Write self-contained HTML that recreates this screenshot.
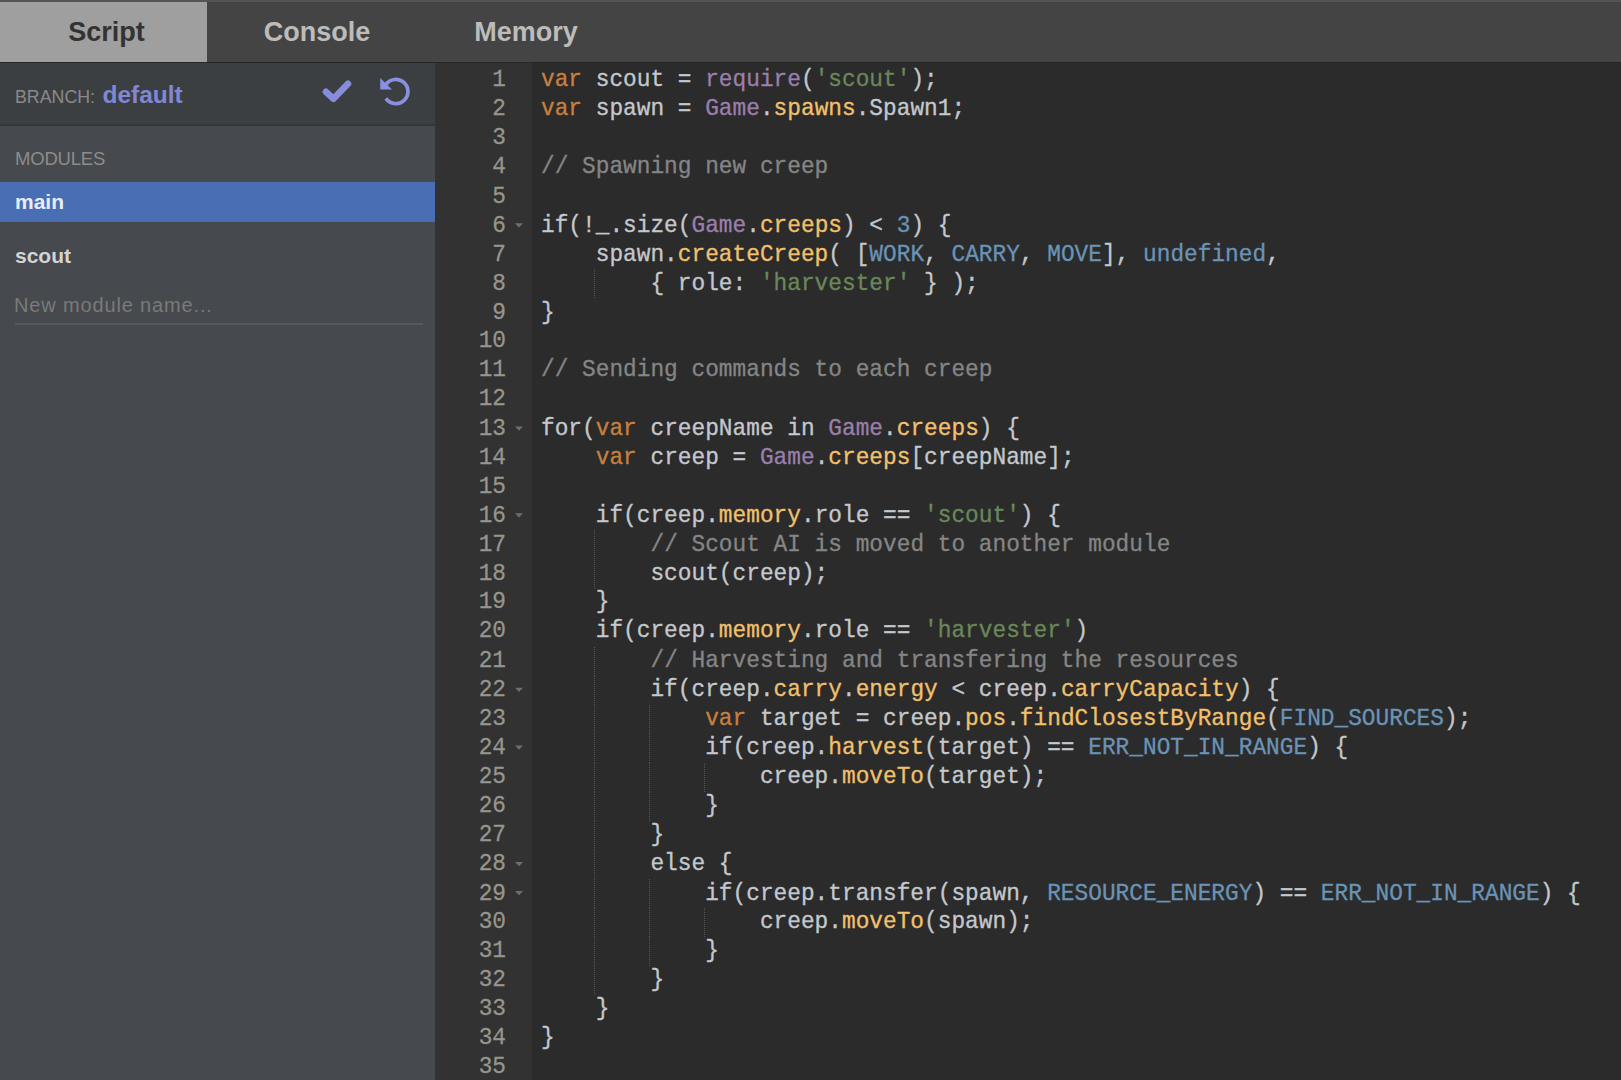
<!DOCTYPE html>
<html><head><meta charset="utf-8">
<style>
*{margin:0;padding:0;box-sizing:border-box}
html,body{width:1621px;height:1080px;overflow:hidden;background:#2b2b2b;font-family:"Liberation Sans",sans-serif}
#tabs{position:absolute;left:0;top:0;width:1621px;height:63px;background:#444;border-top:2px solid #555;border-bottom:1px solid #262626}
.tab{position:absolute;top:0;height:60px;font-weight:bold;font-size:27px;line-height:60px;text-align:center;color:#bcbcbc}
.tab.act{background:#9f9f9f;color:#333}
#side{position:absolute;left:0;top:63px;width:435px;height:1017px;background:#46494d}
#hdr{position:absolute;left:0;top:0;width:435px;height:63px;background:#3c3f42;border-bottom:2px solid #35383b}
.br{position:absolute;left:15px;top:0;line-height:63px;font-size:17.8px;color:#8a8a8a;white-space:nowrap}
.br b{margin-left:2.5px;font-size:24.5px;color:#8088d4}
.mods{position:absolute;left:15px;top:86px;font-size:18.5px;letter-spacing:-0.2px;color:#8c8c8c;line-height:20px}
.item{position:absolute;left:0;width:435px;height:40px;font-weight:bold;font-size:21px;line-height:40px;padding-left:15px;color:#d4d4d4}
.item.sel{background:#4a6eb4;color:#e8ecf5}
.ph{position:absolute;left:14px;top:228.5px;font-size:20px;letter-spacing:0.85px;color:#7a7a7a;line-height:26px;white-space:nowrap}
.uline{position:absolute;left:15px;top:260px;width:408px;height:2px;background:#55585c}
#gutter{position:absolute;left:435px;top:63px;width:97px;height:1017px;background:#323232}
.gl{position:relative;height:27.1308px;line-height:27.1308px;font-family:"Liberation Mono",monospace;font-size:22.8px;color:#96968e;text-align:right;padding-right:26px;-webkit-text-stroke:0.25px currentColor}
.fw{position:absolute;left:80px;top:11.5px;width:0;height:0;border-left:4.5px solid transparent;border-right:4.5px solid transparent;border-top:4.5px solid #6e6e6e}
#gwrap{position:absolute;left:0;top:3px;width:97px;transform:scaleY(1.07);transform-origin:0 0}
#code{position:absolute;left:541px;top:66px;font-family:"Liberation Mono",monospace;font-size:22.8px;color:#c4c8cc;transform:scaleY(1.07);transform-origin:0 0;-webkit-text-stroke:0.3px currentColor}
.ln{height:27.1308px;line-height:27.1308px;white-space:pre}
.k{color:#c8803e}.g{color:#9a7fac}.s{color:#6a8759}.p{color:#f2c06c}.c{color:#6a93b6}.m{color:#858585}
.ig{position:absolute;width:1px;height:29.03px;background:repeating-linear-gradient(to bottom,#545454 0 1px,transparent 1px 2px)}
#wrap{position:absolute;left:0;top:0;width:1621px;height:1080px;background:#2b2b2b}
</style></head><body><div id="wrap">
<div id="tabs">
<div class="tab act" style="left:0;width:207px"></div>
<div class="tab act" style="left:0;width:213px;background:none">Script</div>
<div class="tab" style="left:212px;width:210px">Console</div>
<div class="tab" style="left:421px;width:210px">Memory</div>
</div>
<div id="side">
<div id="hdr"><div class="br">BRANCH: <b>default</b></div>
<svg style="position:absolute;left:318px;top:14px" width="40" height="30" viewBox="0 0 40 30"><path d="M8 14.8 L15.5 21.8 L30 6.8" fill="none" stroke="#878cdc" stroke-width="6.6" stroke-linecap="round" stroke-linejoin="round"/></svg>
<svg style="position:absolute;left:375px;top:8px" width="40" height="40" viewBox="0 0 40 40"><path d="M10.9 13.6 A12.1 12.1 0 1 1 10.9 27.4" fill="none" stroke="#8a8fe0" stroke-width="3.7"/><path d="M5.2 7 L5.2 18.6 L17 18.6 Z" fill="#8a8fe0"/></svg>
</div>
<div class="mods">MODULES</div>
<div class="item sel" style="top:119px">main</div>
<div class="item" style="top:173px">scout</div>
<div class="ph">New module name...</div>
<div class="uline"></div>
</div>
<div id="gutter"><div id="gwrap">
<div class="gl">1</div>
<div class="gl">2</div>
<div class="gl">3</div>
<div class="gl">4</div>
<div class="gl">5</div>
<div class="gl">6<i class="fw"></i></div>
<div class="gl">7</div>
<div class="gl">8</div>
<div class="gl">9</div>
<div class="gl">10</div>
<div class="gl">11</div>
<div class="gl">12</div>
<div class="gl">13<i class="fw"></i></div>
<div class="gl">14</div>
<div class="gl">15</div>
<div class="gl">16<i class="fw"></i></div>
<div class="gl">17</div>
<div class="gl">18</div>
<div class="gl">19</div>
<div class="gl">20</div>
<div class="gl">21</div>
<div class="gl">22<i class="fw"></i></div>
<div class="gl">23</div>
<div class="gl">24<i class="fw"></i></div>
<div class="gl">25</div>
<div class="gl">26</div>
<div class="gl">27</div>
<div class="gl">28<i class="fw"></i></div>
<div class="gl">29<i class="fw"></i></div>
<div class="gl">30</div>
<div class="gl">31</div>
<div class="gl">32</div>
<div class="gl">33</div>
<div class="gl">34</div>
<div class="gl">35</div>
</div></div>
<div class="ig" style="top:269.21px;left:594.22px"></div><div class="ig" style="top:530.48px;left:594.22px"></div><div class="ig" style="top:559.51px;left:594.22px"></div><div class="ig" style="top:646.60px;left:594.22px"></div><div class="ig" style="top:675.63px;left:594.22px"></div><div class="ig" style="top:704.66px;left:594.22px"></div><div class="ig" style="top:704.66px;left:648.94px"></div><div class="ig" style="top:733.69px;left:594.22px"></div><div class="ig" style="top:733.69px;left:648.94px"></div><div class="ig" style="top:762.72px;left:594.22px"></div><div class="ig" style="top:762.72px;left:648.94px"></div><div class="ig" style="top:762.72px;left:703.66px"></div><div class="ig" style="top:791.75px;left:594.22px"></div><div class="ig" style="top:791.75px;left:648.94px"></div><div class="ig" style="top:820.78px;left:594.22px"></div><div class="ig" style="top:849.81px;left:594.22px"></div><div class="ig" style="top:878.84px;left:594.22px"></div><div class="ig" style="top:878.84px;left:648.94px"></div><div class="ig" style="top:907.87px;left:594.22px"></div><div class="ig" style="top:907.87px;left:648.94px"></div><div class="ig" style="top:907.87px;left:703.66px"></div><div class="ig" style="top:936.90px;left:594.22px"></div><div class="ig" style="top:936.90px;left:648.94px"></div><div class="ig" style="top:965.93px;left:594.22px"></div>
<div id="code">
<div class="ln"><span class="k">var</span> scout = <span class="g">require</span>(<span class="s">&#x27;scout&#x27;</span>);</div>
<div class="ln"><span class="k">var</span> spawn = <span class="g">Game</span>.<span class="p">spawns</span>.Spawn1;</div>
<div class="ln"></div>
<div class="ln"><span class="m">// Spawning new creep</span></div>
<div class="ln"></div>
<div class="ln">if(!_.size(<span class="g">Game</span>.<span class="p">creeps</span>) &lt; <span class="c">3</span>) {</div>
<div class="ln">    spawn.<span class="p">createCreep</span>( [<span class="c">WORK</span>, <span class="c">CARRY</span>, <span class="c">MOVE</span>], <span class="c">undefined</span>,</div>
<div class="ln">        { role: <span class="s">&#x27;harvester&#x27;</span> } );</div>
<div class="ln">}</div>
<div class="ln"></div>
<div class="ln"><span class="m">// Sending commands to each creep</span></div>
<div class="ln"></div>
<div class="ln">for(<span class="k">var</span> creepName in <span class="g">Game</span>.<span class="p">creeps</span>) {</div>
<div class="ln">    <span class="k">var</span> creep = <span class="g">Game</span>.<span class="p">creeps</span>[creepName];</div>
<div class="ln"></div>
<div class="ln">    if(creep.<span class="p">memory</span>.role == <span class="s">&#x27;scout&#x27;</span>) {</div>
<div class="ln">        <span class="m">// Scout AI is moved to another module</span></div>
<div class="ln">        scout(creep);</div>
<div class="ln">    }</div>
<div class="ln">    if(creep.<span class="p">memory</span>.role == <span class="s">&#x27;harvester&#x27;</span>)</div>
<div class="ln">        <span class="m">// Harvesting and transfering the resources</span></div>
<div class="ln">        if(creep.<span class="p">carry</span>.<span class="p">energy</span> &lt; creep.<span class="p">carryCapacity</span>) {</div>
<div class="ln">            <span class="k">var</span> target = creep.<span class="p">pos</span>.<span class="p">findClosestByRange</span>(<span class="c">FIND_SOURCES</span>);</div>
<div class="ln">            if(creep.<span class="p">harvest</span>(target) == <span class="c">ERR_NOT_IN_RANGE</span>) {</div>
<div class="ln">                creep.<span class="p">moveTo</span>(target);</div>
<div class="ln">            }</div>
<div class="ln">        }</div>
<div class="ln">        else {</div>
<div class="ln">            if(creep.transfer(spawn, <span class="c">RESOURCE_ENERGY</span>) == <span class="c">ERR_NOT_IN_RANGE</span>) {</div>
<div class="ln">                creep.<span class="p">moveTo</span>(spawn);</div>
<div class="ln">            }</div>
<div class="ln">        }</div>
<div class="ln">    }</div>
<div class="ln">}</div>
<div class="ln"></div>
</div>
</div></body></html>
